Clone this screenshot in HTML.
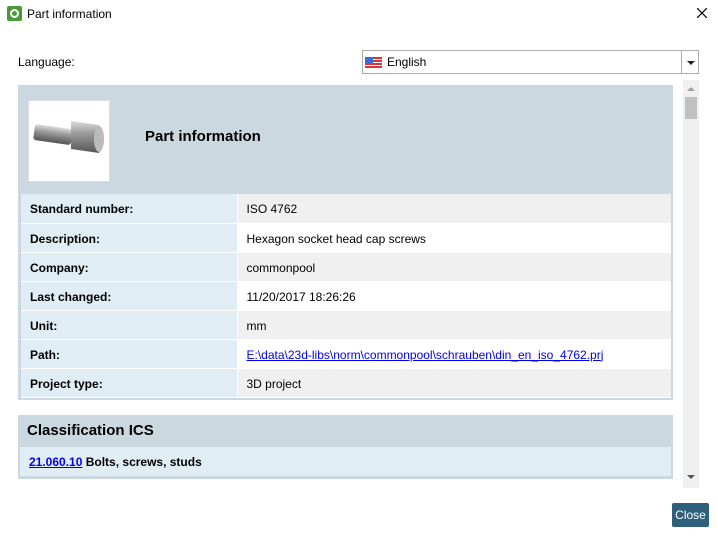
<!DOCTYPE html>
<html><head><meta charset="utf-8"><style>
*{box-sizing:border-box;margin:0;padding:0}
body{width:718px;height:538px;background:#fff;font-family:"Liberation Sans",sans-serif;font-size:12px;color:#000;position:relative;overflow:hidden}
.abs{position:absolute}
table{border-collapse:collapse}
td{height:29px;border-bottom:1px solid #fff;padding:2px 0 0 9px;font-size:12px}
td.l{background:#e0edf4;font-weight:bold;width:216px;border-right:1px solid #fff}
tr.g td.v{background:#f0f0f0}
tr.w td.v{background:#fff}
a{color:#0000ee;text-decoration:underline}
</style></head><body>
<div class="abs" style="left:7px;top:6px;width:15px;height:15px;background:#4a9a3a;border-radius:2px"><div style="margin:3px;width:9px;height:9px;border:2px solid #fff;border-radius:50%"></div></div>
<div class="abs" style="left:27px;top:7px;font-size:12px">Part information</div>
<svg class="abs" style="left:697px;top:8px" width="10" height="10"><path d="M0 0L10 10M10 0L0 10" stroke="#000" stroke-width="1.2"/></svg>
<div class="abs" style="left:18px;top:55px">Language:</div>
<div class="abs" style="left:362px;top:50px;width:337px;height:24px;border:1px solid #acacac">
 <div class="abs" style="left:2px;top:6px;width:17px;height:11px;background:repeating-linear-gradient(#d33 0 2px,#fff 2px 3px)"><div style="width:8px;height:6px;background:#3a6fd8"></div></div>
 <div class="abs" style="left:24px;top:4px">English</div>
 <div class="abs" style="left:318px;top:0;width:1px;height:22px;background:#acacac"></div>
 <div class="abs" style="left:324px;top:10px;border-left:4px solid transparent;border-right:4px solid transparent;border-top:4px solid #222"></div>
</div>
<div class="abs" style="left:683px;top:80px;width:16px;height:408px;background:#f0f0f0">
 <div class="abs" style="left:4px;top:7px;border-left:4px solid transparent;border-right:4px solid transparent;border-bottom:4px solid #a0a0a0"></div>
 <div class="abs" style="left:2px;top:17px;width:12px;height:22px;background:#c0c0c0"></div>
 <div class="abs" style="left:4px;top:395px;border-left:4px solid transparent;border-right:4px solid transparent;border-top:4px solid #555"></div>
</div>
<div class="abs" style="left:18px;top:85px;width:655px;height:315px;background:#ccd8df">
 <div class="abs" style="left:10px;top:15px;width:82px;height:82px;background:#fff;border:1px solid #ddd">
  <svg width="80" height="80"><defs><linearGradient id="m" x1="0" y1="0" x2="0" y2="1"><stop offset="0" stop-color="#ddd"/><stop offset=".4" stop-color="#999"/><stop offset="1" stop-color="#555"/></linearGradient></defs>
  <rect x="5" y="25" width="38" height="16" rx="3" fill="url(#m)" transform="rotate(8 20 33)"/>
  <path d="M42 20 L70 24 Q76 34 70 52 L42 48 Z" fill="url(#m)"/><ellipse cx="70" cy="38" rx="5" ry="13" fill="#bbb"/></svg>
 </div>
 <div class="abs" style="left:127px;top:43px;font-size:15px;font-weight:bold">Part information</div>
 <table class="abs" style="left:3px;top:109px;width:650px">
  <tr class="g"><td class="l">Standard number:</td><td class="v">ISO 4762</td></tr>
  <tr class="w"><td class="l">Description:</td><td class="v">Hexagon socket head cap screws</td></tr>
  <tr class="g"><td class="l">Company:</td><td class="v">commonpool</td></tr>
  <tr class="w"><td class="l">Last changed:</td><td class="v">11/20/2017 18:26:26</td></tr>
  <tr class="g"><td class="l">Unit:</td><td class="v">mm</td></tr>
  <tr class="w"><td class="l">Path:</td><td class="v"><a>E:\data\23d-libs\norm\commonpool\schrauben\din_en_iso_4762.prj</a></td></tr>
  <tr class="g"><td class="l">Project type:</td><td class="v">3D project</td></tr>
 </table>
</div>
<div class="abs" style="left:18px;top:415px;width:655px;height:64px;background:#ccd8df">
 <div class="abs" style="left:9px;top:7px;font-size:15px;font-weight:bold">Classification ICS</div>
 <div class="abs" style="left:2px;top:32px;width:651px;height:29px;background:#e0edf4;padding:8px 0 0 9px;font-weight:bold"><a>21.060.10</a> Bolts, screws, studs</div>
</div>
<div class="abs" style="left:672px;top:503px;width:37px;height:24px;background:#2e5f7d;color:#fff;border-radius:2px;text-align:center;line-height:24px">Close</div>
</body></html>
